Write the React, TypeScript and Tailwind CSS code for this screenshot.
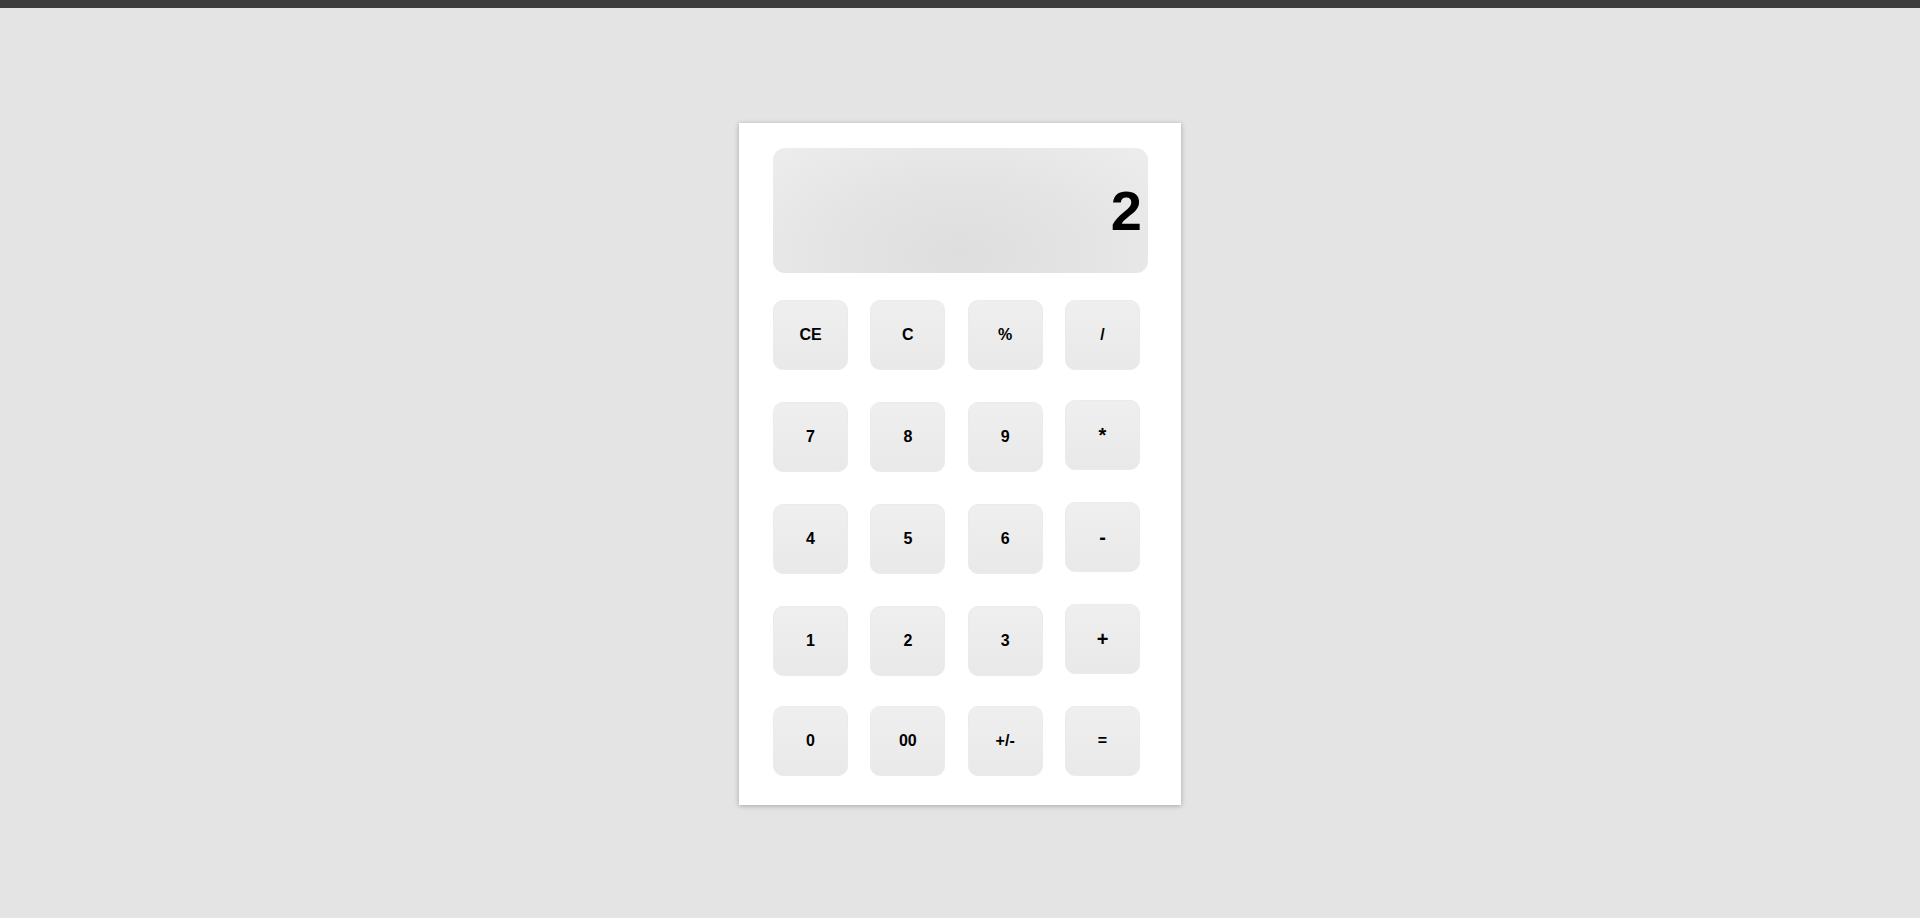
const rows: { label: string; big?: boolean }[][] = [
  [{ label: "CE" }, { label: "C" }, { label: "%" }, { label: "/" }],
  [{ label: "7" }, { label: "8" }, { label: "9" }, { label: "*", big: true }],
  [{ label: "4" }, { label: "5" }, { label: "6" }, { label: "-", big: true }],
  [{ label: "1" }, { label: "2" }, { label: "3" }, { label: "+", big: true }],
  [{ label: "0" }, { label: "00" }, { label: "+/-" }, { label: "=" }],
]

const Key = ({ label, big }: { label: string; big?: boolean }) => (
  <button
    className={`w-[75px] h-[70px] rounded-[10px] border border-[#ebebeb] bg-gradient-to-b from-[#efefef] to-[#e9e9e9] flex items-center justify-center font-bold text-black ${
      big ? "text-[20px] -mt-[2px]" : "text-[16px]"
    }`}
  >
    {label}
  </button>
)

export default function App() {
  return (
    <div className="min-h-[918px] bg-[#e4e4e4] font-['Liberation_Sans',Arial,sans-serif]">
      <div className="h-[8px] bg-[#3d3d3d]" />
      <div className="w-[442px] mx-auto mt-[115px] bg-white shadow-[0_1px_5px_rgba(0,0,0,0.28)] pt-[25px] pl-[34px] pr-[33px] pb-[29px]">
        <div className="h-[125px] w-[375px] rounded-[12px] bg-[radial-gradient(ellipse_at_50%_85%,#dedede_0%,#e4e4e4_50%,#ededed_100%)] flex items-center justify-end pr-[6px]">
          <span className="text-[56px] font-bold leading-none text-black">2</span>
        </div>
        <div className="flex flex-col mt-[27px] w-[367px]">
          {rows.map((row, i) => (
            <div
              key={i}
              className={`flex justify-between items-start ${i === 0 ? "" : i === 4 ? "mt-[30px]" : "mt-[32px]"}`}
            >
              {row.map((k) => (
                <Key key={k.label} label={k.label} big={k.big} />
              ))}
            </div>
          ))}
        </div>
      </div>
    </div>
  )
}
